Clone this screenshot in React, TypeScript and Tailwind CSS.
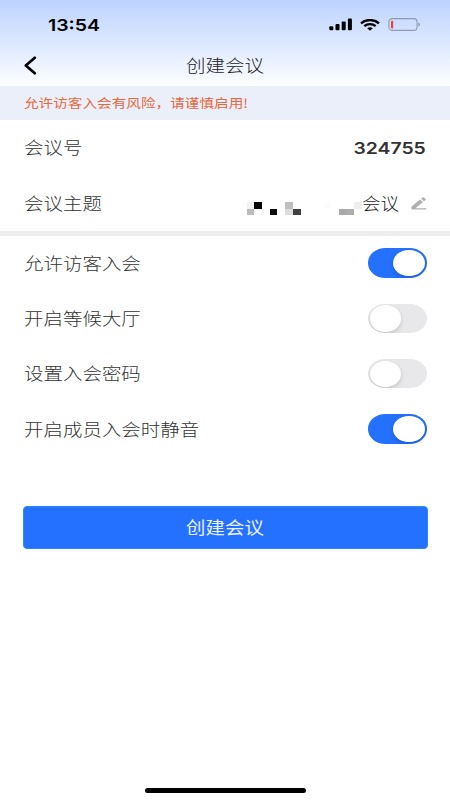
import { useState } from "react";

type SettingKey = "guest" | "lobby" | "password" | "mute";

const settings: { key: SettingKey; label: string }[] = [
  { key: "guest", label: "允许访客入会" },
  { key: "lobby", label: "开启等候大厅" },
  { key: "password", label: "设置入会密码" },
  { key: "mute", label: "开启成员入会时静音" },
];

// Masked part of the meeting topic, two rows of 15 cells
const maskRows = [
  ["#f1f1f1", "#050505", "", "", "", "#bfbfbf", "", "", "", "", "#fcfcfc", "", "", "", "#eeeeee"],
  ["#bcbcbc", "", "", "#0c0c0c", "", "#dddddd", "#404040", "", "", "", "", "", "#a9a9a9", "#adadad", ""],
];

function StatusBar() {
  return (
    <div className="flex h-[46px] items-center pt-[3px] pl-[48px] pr-[29px]">
      <span className="origin-left scale-x-[1.18] pt-px font-['Inter'] text-[16.5px] font-semibold leading-none text-black">
        13:54
      </span>
      <div className="ml-auto flex items-center">
        <svg width="24" height="13" viewBox="0 0 24 13" className="mr-[7px]">
          <rect x="0.3" y="8.3" width="4" height="4" rx="1" />
          <rect x="6.5" y="6" width="4" height="6.3" rx="1" />
          <rect x="12.7" y="3.4" width="4" height="8.9" rx="1" />
          <rect x="18.9" y="0.6" width="4" height="11.7" rx="1" />
        </svg>
        <svg width="20" height="12" viewBox="0 0 20 12" className="mr-[8px]" fill="none" stroke="black" strokeWidth="2.4">
          <path d="M1 4.3C6 0 14 0 19 4.3" />
          <path d="M4.3 7.2C7.5 4.4 12.5 4.4 15.7 7.2" />
          <path d="M7.2 9.3C8.8 8 11.2 8 12.8 9.3L10 11.8Z" fill="black" stroke="none" />
        </svg>
        <svg width="33" height="13" viewBox="0 0 33 13" fill="none">
          <rect x="0.9" y="0.6" width="28.2" height="11.8" rx="3.5" stroke="#8f9bb3" strokeWidth="1.1" />
          <rect x="3" y="2.8" width="2.2" height="7.6" rx="0.9" fill="#ff3b30" />
          <path d="M30.5 4.6C32.4 5.2 32.4 7.8 30.5 8.4Z" fill="#8290a9" />
        </svg>
      </div>
    </div>
  );
}

function Label({ children }: { children: string }) {
  return (
    <span className="origin-left scale-x-[1.18] text-[16.5px] font-light leading-none text-[#333]">
      {children}
    </span>
  );
}

function Toggle({ on, onClick }: { on: boolean; onClick: () => void }) {
  return (
    <button
      role="switch"
      aria-checked={on}
      onClick={onClick}
      className={`flex h-[29.5px] w-[59px] items-center overflow-hidden rounded-[17.5px/14.75px] px-[2px] ${
        on ? "justify-end bg-[#2470ff]" : "justify-start bg-[#e8e8ea]"
      }`}
    >
      <span className="h-[26.3px] w-[31.5px] rounded-[50%] bg-white shadow-[0_2px_4px_rgba(0,0,0,0.16)]" />
    </button>
  );
}

export default function App() {
  const [values, setValues] = useState<Record<SettingKey, boolean>>({
    guest: true,
    lobby: false,
    password: false,
    mute: true,
  });

  function toggle(key: SettingKey) {
    setValues((prev) => ({ ...prev, [key]: !prev[key] }));
  }

  return (
    <main className="flex h-[800px] w-[450px] flex-col overflow-hidden bg-white font-['Noto_Sans_CJK_SC',sans-serif]">
      {/* Header */}
      <header className="h-[86px] bg-linear-to-b from-[#bdd3ff] via-[#dce8ff] to-[#fdfeff]">
        <StatusBar />
        <div className="grid h-[39px] grid-cols-[1fr_auto_1fr] items-center">
          <svg width="14" height="19" viewBox="0 0 14 19" className="ml-[23px]" fill="none">
            <path d="M11.8 1.8L2.8 9.5L11.8 17.2" stroke="black" strokeWidth="2.7" strokeLinecap="round" strokeLinejoin="round" />
          </svg>
          <h1 className="scale-x-[1.18] pb-px text-[16.5px] font-light leading-none text-[#1d2129]">创建会议</h1>
        </div>
      </header>

      {/* Warning */}
      <div className="flex h-[34px] items-center bg-[#ebeff9] pl-[24px]">
        <p className="origin-left scale-x-[1.18] text-[12.4px] leading-none text-[#e8683c]">
          允许访客入会有风险，请谨慎启用!
        </p>
      </div>

      {/* Meeting info */}
      <section>
        <div className="flex h-[55.5px] items-center justify-between pb-px pl-[24px] pr-[24px]">
          <Label>会议号</Label>
          <span className="origin-right scale-x-[1.21] pt-px font-['Inter'] text-[16px] font-semibold leading-none text-[#333]">
            324755
          </span>
        </div>
        <div className="flex h-[55.5px] items-center pl-[24px] pr-[23px]">
          <Label>会议主题</Label>
          <div className="ml-auto mt-[11px] grid grid-cols-[repeat(15,7.7px)] grid-rows-[6.5px_6.5px]">
            {maskRows.flat().map((color, i) => (
              <span key={i} style={{ backgroundColor: color || "transparent" }} />
            ))}
          </div>
          <span className="mr-[16px] origin-left scale-x-[1.12] pb-px text-[16.5px] font-light leading-none text-[#222]">
            会议
          </span>
          <svg width="16" height="13" viewBox="0 0 16 13" fill="#b0b0b0">
            <path d="M0.5 12V9.4L9 2.6L12 5.1L4.6 11.3H15.3V12.4H0.5Z" />
            <path d="M10 1.8L11.6 0.6Q12.3 0.1 13 0.6L14.6 1.9Q15.2 2.5 14.6 3L13 4.3Z" />
          </svg>
        </div>
      </section>

      <div className="h-[4.5px] shrink-0 bg-[#ededed]" />

      {/* Settings */}
      <section>
        {settings.map(({ key, label }) => (
          <div key={key} className="flex h-[55.3px] items-center justify-between pl-[24px] pr-[23.5px]">
            <Label>{label}</Label>
            <Toggle on={values[key]} onClick={() => toggle(key)} />
          </div>
        ))}
      </section>

      <button className="ml-[23px] mr-[22px] mt-[49px] flex h-[43.5px] shrink-0 items-center justify-center rounded-[4px] border border-[#2b8cff] bg-[#2470ff]">
        <span className="mr-px scale-x-[1.18] text-[16.5px] leading-none text-white/90">创建会议</span>
      </button>

      {/* Home indicator */}
      <div className="mx-auto mt-auto mb-[7.5px] h-[5px] w-[161px] rounded-full bg-black" />
    </main>
  );
}
